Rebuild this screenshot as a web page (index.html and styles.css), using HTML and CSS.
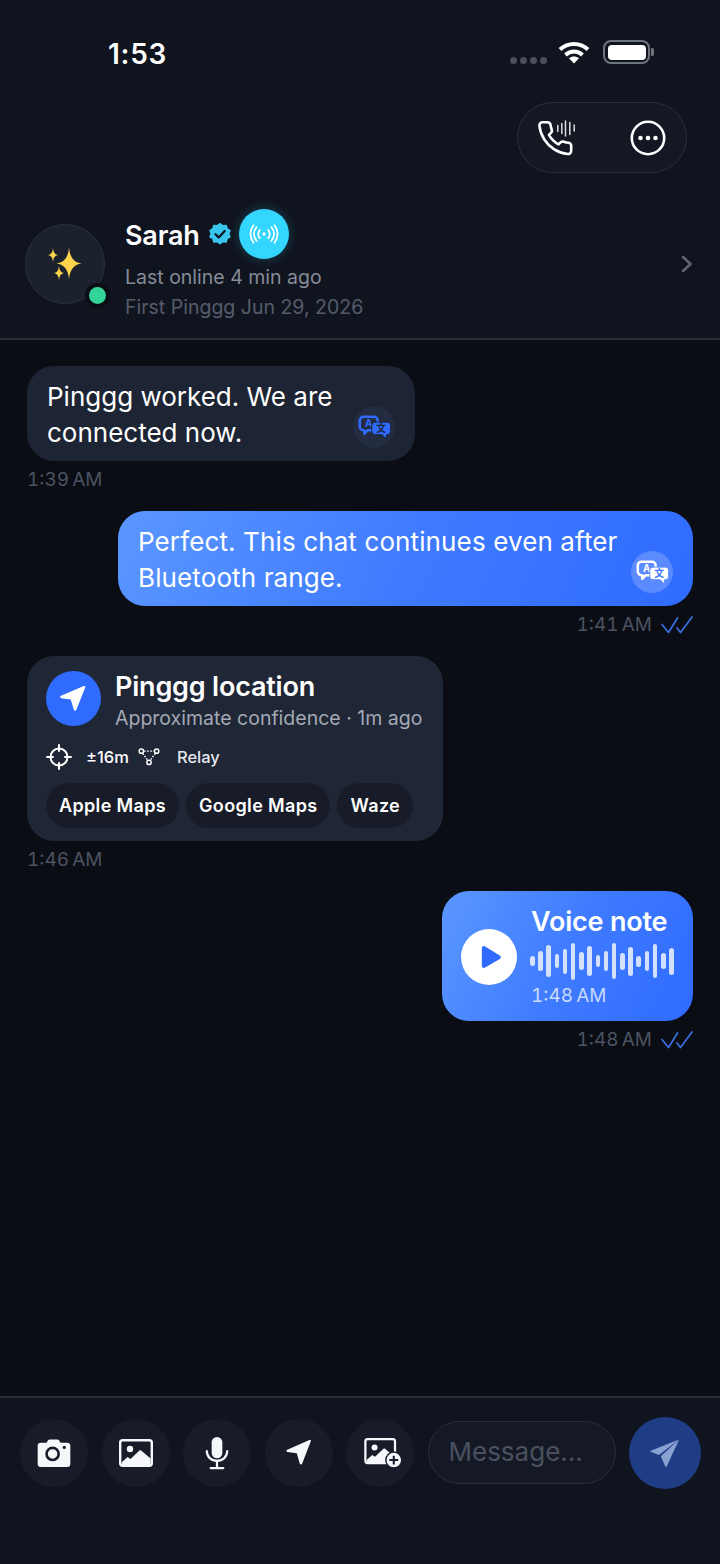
FILE: index.html
```html
<!DOCTYPE html>
<html lang="en">
<head>
    <meta charset="UTF-8">
    <meta name="viewport" content="width=device-width, initial-scale=1.0">
    <title>Pinggg Chat</title>
    <link rel="stylesheet" href="styles.css">
</head>
<body>
    <div class="phone">
        <header class="chat-header">
            <div class="status-bar">
                <span class="status-time">1:53</span>
                <div class="status-icons">
                    <div class="signal-dots"><i></i><i></i><i></i><i></i></div>
                    <svg class="wifi-icon" viewBox="0 0 32 24" fill="none" stroke="#fff" stroke-width="4">
                        <path d="M2 9.500C10 2 22 2 30 9.500"/>
                        <path d="M7.500 15c5-4.600 12-4.600 17 0"/>
                        <path d="M16 23.500l-5-5.300c3-2.400 7-2.400 10 0z" fill="#fff" stroke="none"/>
                    </svg>
                    <div class="battery"><div class="battery-fill"></div></div>
                    <div class="battery-cap"></div>
                </div>
            </div>
            <div class="action-row">
                <div class="action-pill">
                    <svg class="call-icon" viewBox="0 0 40 40" fill="none" stroke="#fff" stroke-linecap="round" stroke-linejoin="round">
                        <g transform="translate(-1 1) scale(1.600)" stroke-width="1.600">
                            <path d="M22 16.920v3a2 2 0 0 1-2.180 2 19.790 19.790 0 0 1-8.630-3.070 19.500 19.500 0 0 1-6-6 19.790 19.790 0 0 1-3.070-8.670A2 2 0 0 1 4.110 2h3a2 2 0 0 1 2 1.720c.127.960.361 1.903.700 2.810a2 2 0 0 1-.450 2.110L8.090 9.910a16 16 0 0 0 6 6l1.270-1.270a2 2 0 0 1 2.110-.450c.907.339 1.850.573 2.810.700A2 2 0 0 1 22 16.920z"/>
                        </g>
                        <path stroke-width="1.500" opacity="0.85" d="M20.800 7.500v6M24.800 5.500v10M28.500 3v15M32.800 4.500v12M37.200 7v6"/>
                    </svg>
                    <svg class="more-icon" viewBox="0 0 36 36" fill="none">
                        <circle cx="18" cy="18" r="16.200" stroke="#fff" stroke-width="2.600"/>
                        <circle cx="10.500" cy="18" r="2.300" fill="#fff"/>
                        <circle cx="18" cy="18" r="2.300" fill="#fff"/>
                        <circle cx="25.500" cy="18" r="2.300" fill="#fff"/>
                    </svg>
                </div>
            </div>
            <div class="profile-row">
                <div class="avatar">
                    <svg class="sparkles" viewBox="0 0 40 40" fill="#fcd34d">
                        <path d="M24 3.500Q25 18 36.500 19.500 25 21 24 35.500 23 21 11.500 19.500 23 18 24 3.500z"/>
                        <path d="M8 4Q8.500 10.500 13 11 8.500 11.500 8 18 7.500 11.500 3 11 7.500 10.500 8 4z"/>
                        <path d="M14 22Q14.500 28.500 19 29 14.500 29.500 14 36 13.500 29.500 9 29 13.500 28.500 14 22z"/>
                    </svg>
                    <span class="online-dot"></span>
                </div>
                <div class="profile-info">
                    <div class="name-line">
                        <span class="profile-name">Sarah</span>
                        <svg class="verified" viewBox="0 0 24 24">
                            <path fill="#38c6ee" d="M12 .800l3 2.200 3.700-.300 1 3.600 3.200 1.900-1.300 3.500 1.300 3.500-3.200 1.900-1 3.600-3.700-.300-3 2.200-3-2.200-3.700.300-1-3.600L1.100 15.200l1.300-3.500-1.300-3.500 3.200-1.900 1-3.600 3.700.300z"/>
                            <path d="M7.500 12.200l3.200 3.200 6-6.400" fill="none" stroke="#10141e" stroke-width="2.200" stroke-linecap="round" stroke-linejoin="round"/>
                        </svg>
                        <div class="ping-badge">
                            <svg viewBox="0 0 32 24" fill="none" stroke="#fff" stroke-width="1.900" stroke-linecap="round">
                                <circle cx="16" cy="12" r="1.800" fill="#fff" stroke="none"/>
                                <path d="M11.500 7.500a6.500 6.500 0 0 0 0 9M20.500 7.500a6.500 6.500 0 0 1 0 9"/>
                                <path d="M8 4.500a11 11 0 0 0 0 15M24 4.500a11 11 0 0 1 0 15"/>
                                <path d="M4.500 2.500a15.500 15.500 0 0 0 0 19M27.500 2.500a15.500 15.500 0 0 1 0 19"/>
                            </svg>
                        </div>
                    </div>
                    <div class="last-online">Last online 4 min ago</div>
                    <div class="first-ping">First Pinggg Jun 29, 2026</div>
                </div>
                <svg class="chevron" viewBox="0 0 14 20" fill="none" stroke="#5d6371" stroke-width="2.600" stroke-linecap="round" stroke-linejoin="round">
                    <path d="M3 3l7.500 7L3 17"/>
                </svg>
            </div>
        </header>

        <main class="messages">
            <div class="message incoming">
                <div class="bubble bubble-in bubble-first">
                    Pinggg worked. We are connected now.
                    <div class="translate-btn translate-in">
                        <svg viewBox="0 0 37 28">
                            <path d="M6 2h12a4 4 0 0 1 4 4v7a4 4 0 0 1-4 4h-7l-4 4v-4H6a4 4 0 0 1-4-4V6a4 4 0 0 1 4-4z" fill="none" stroke="#2f6bff" stroke-width="2.800" stroke-linejoin="round"/>
                            <text x="12" y="14" text-anchor="middle" class="translate-letter" fill="#2f6bff">A</text>
                            <path d="M19 8h14a3.500 3.500 0 0 1 3.500 3.500v7A3.500 3.500 0 0 1 33 22h-1v5l-5-5h-8a3.500 3.500 0 0 1-3.500-3.500v-7A3.500 3.500 0 0 1 19 8z" fill="#2f6bff" stroke="#1d2433" stroke-width="1"/>
                            <text x="26" y="19.500" text-anchor="middle" class="translate-letter" fill="#1d2433">文</text>
                        </svg>
                    </div>
                </div>
                <div class="meta">1:39 AM</div>
            </div>

            <div class="message outgoing">
                <div class="bubble bubble-out bubble-second">
                    Perfect. This chat continues even after Bluetooth range.
                    <div class="translate-btn translate-out">
                        <svg viewBox="0 0 37 28">
                            <path d="M6 2h12a4 4 0 0 1 4 4v7a4 4 0 0 1-4 4h-7l-4 4v-4H6a4 4 0 0 1-4-4V6a4 4 0 0 1 4-4z" fill="none" stroke="#fff" stroke-width="2.800" stroke-linejoin="round"/>
                            <text x="12" y="14" text-anchor="middle" class="translate-letter" fill="#fff">A</text>
                            <path d="M19 8h14a3.500 3.500 0 0 1 3.500 3.500v7A3.500 3.500 0 0 1 33 22h-1v5l-5-5h-8a3.500 3.500 0 0 1-3.500-3.500v-7A3.500 3.500 0 0 1 19 8z" fill="#fff" stroke="#5f8eff" stroke-width="1"/>
                            <text x="26" y="19.500" text-anchor="middle" class="translate-letter" fill="#3f77ff">文</text>
                        </svg>
                    </div>
                </div>
                <div class="meta">
                    1:41 AM
                    <svg class="read-check" viewBox="0 0 32 18" fill="none" stroke="#3b6fe0" stroke-width="1.700" stroke-linecap="round" stroke-linejoin="round">
                        <path d="M1 8.500l6.500 8L16.500 2"/>
                        <path d="M16 12l3.500 4.500L31 1"/>
                    </svg>
                </div>
            </div>

            <div class="message incoming">
                <div class="location-card">
                    <div class="location-head">
                        <div class="location-icon">
                            <svg viewBox="0 0 28 28" fill="#fff"><path d="M24.500 4.200c.600-.900-.200-1.800-1.200-1.400L2.700 11.500c-1.200.500-1 2 .300 2.200l8.500 1.200 2.800 9.200c.300 1.100 1.700 1.200 2.200.200z"/></svg>
                        </div>
                        <div>
                            <div class="location-title">Pinggg location</div>
                            <div class="location-sub">Approximate confidence · 1m ago</div>
                        </div>
                    </div>
                    <div class="location-meta">
                        <svg class="target-icon" viewBox="0 0 26 26" fill="none" stroke="#fff" stroke-width="2" stroke-linecap="round">
                            <circle cx="13" cy="13" r="8.500"/>
                            <path d="M13 1v6M13 19v6M1 13h6M19 13h6"/>
                        </svg>
                        <span class="accuracy">±16m</span>
                        <svg class="relay-icon" viewBox="0 0 24 20" fill="none" stroke="#fff" stroke-width="1.600">
                            <circle cx="3.500" cy="3.500" r="2.400"/>
                            <circle cx="20.500" cy="3.500" r="2.400"/>
                            <circle cx="12" cy="16" r="2.400"/>
                            <path d="M6.500 3.500h11M5 6l5.500 7.500M19 6l-5.500 7.500" stroke-dasharray="1.800 1.600"/>
                        </svg>
                        <span class="relay-label">Relay</span>
                    </div>
                    <div class="map-links">
                        <span class="map-chip">Apple Maps</span>
                        <span class="map-chip">Google Maps</span>
                        <span class="map-chip">Waze</span>
                    </div>
                </div>
                <div class="meta">1:46 AM</div>
            </div>

            <div class="message outgoing">
                <div class="bubble-out voice-note">
                    <div class="play-btn">
                        <svg viewBox="0 0 24 26" fill="#2f6bff"><path d="M2 3.500C2 1.500 4 .500 5.600 1.500l16 9.800c1.500.900 1.500 2.900 0 3.800l-16 9.400C4 25.500 2 24.500 2 22.500z"/></svg>
                    </div>
                    <div class="voice-body">
                        <div class="voice-title">Voice note</div>
                        <div class="waveform">
                            <i style="height:10px"></i><i style="height:20px"></i><i style="height:32px"></i><i style="height:14px"></i><i style="height:25px"></i><i style="height:37px"></i><i style="height:18px"></i><i style="height:30px"></i><i style="height:12px"></i><i style="height:20px"></i><i style="height:36px"></i><i style="height:17px"></i><i style="height:29px"></i><i style="height:11px"></i><i style="height:20px"></i><i style="height:34px"></i><i style="height:16px"></i><i style="height:27px"></i>
                        </div>
                        <div class="voice-time">1:48 AM</div>
                    </div>
                </div>
                <div class="meta">
                    1:48 AM
                    <svg class="read-check" viewBox="0 0 32 18" fill="none" stroke="#3b6fe0" stroke-width="1.700" stroke-linecap="round" stroke-linejoin="round">
                        <path d="M1 8.500l6.500 8L16.500 2"/>
                        <path d="M16 12l3.500 4.500L31 1"/>
                    </svg>
                </div>
            </div>
        </main>

        <footer class="composer">
            <div class="tool-btn">
                <svg viewBox="0 0 36 30">
                    <path fill="#f5f7fb" d="M4 4h6l1.600-2.600C12 .800 12.700.500 13.400.500h8.200c.700 0 1.400.300 1.800.900L25 4h7a3.500 3.500 0 0 1 3.500 3.500v19A3.500 3.500 0 0 1 32 30H4a3.500 3.500 0 0 1-3.500-3.500v-19A3.500 3.500 0 0 1 4 4z"/>
                    <circle cx="16.500" cy="16" r="6.500" fill="none" stroke="#171c28" stroke-width="2.800"/>
                    <circle cx="29" cy="9" r="1.700" fill="#171c28"/>
                </svg>
            </div>
            <div class="tool-btn">
                <svg viewBox="0 0 34 28">
                    <rect x="1.200" y="1.200" width="31.600" height="25.600" rx="2.500" fill="#171c28" stroke="#f5f7fb" stroke-width="2.400"/>
                    <circle cx="11" cy="10" r="3.200" fill="#f5f7fb"/>
                    <path fill="#f5f7fb" d="M2.500 23.500l6-5.500 3 2 9-8.500c.500-.400 1.100-.400 1.600 0l9.500 8V25a1 1 0 0 1-1 1H3z"/>
                </svg>
            </div>
            <div class="tool-btn">
                <svg class="mic-icon" viewBox="0 0 24 34" fill="none" stroke="#f5f7fb" stroke-width="2.300" stroke-linecap="round">
                    <rect x="6.500" y="0" width="11" height="22" rx="5.500" fill="#f5f7fb" stroke="none"/>
                    <path d="M1.500 14.500c0 6 4.500 10 10.500 10s10.500-4 10.500-10"/>
                    <path d="M12 24.500V31M5.500 32h13"/>
                </svg>
            </div>
            <div class="tool-btn">
                <svg viewBox="0 0 28 28" fill="#f5f7fb"><path d="M25.700 2.500c.700-1-.200-2-1.300-1.600L2.300 10.700c-1.200.500-1.100 2.100.200 2.300l9.300 1.300 2.900 10.300c.300 1.200 1.900 1.300 2.400.200z"/></svg>
            </div>
            <div class="tool-btn">
                <svg class="add-photo" viewBox="0 0 40 32">
                    <rect x="1.200" y="1.200" width="31.600" height="25.600" rx="2.500" fill="#171c28" stroke="#f5f7fb" stroke-width="2.400"/>
                    <circle cx="11" cy="10" r="3.200" fill="#f5f7fb"/>
                    <path fill="#f5f7fb" d="M2.500 23.500l6-5.500 3 2 9-8.500c.500-.400 1.100-.400 1.600 0l9.500 8V25a1 1 0 0 1-1 1H3z"/>
                    <circle cx="31.500" cy="23.500" r="8.500" fill="#f5f7fb" stroke="#171c28" stroke-width="1.500"/>
                    <path d="M31.500 18.800v9.400M26.800 23.500h9.400" stroke="#171c28" stroke-width="2.200"/>
                </svg>
            </div>
            <div class="message-input">Message...</div>
            <div class="send-btn">
                <svg viewBox="0 0 32 32" fill="#8aa2d3">
                    <path d="M31 1.500L.800 13.500c-.600.300-.600 1 0 1.200l8.700 3.500z"/>
                    <path d="M31 1.500L11.500 19.500l5 11.200c.300.600 1 .500 1.200-.100z"/>
                </svg>
            </div>
        </footer>
    </div>
</body>
</html>
```

FILE: styles.css
```css
* {
    box-sizing: border-box;
}
body {
    font-family: 'Inter', 'Liberation Sans', sans-serif;
    margin: 0;
    background-color: #0a0d14;
    color: #ffffff;
}
.phone {
    display: flex;
    flex-direction: column;
    width: 720px;
    height: 1564px;
    overflow: hidden;
}
svg {
    display: block;
    flex-shrink: 0;
}

/* header */
.chat-header {
    background-color: #10141e;
    border-bottom: 2px solid #292e39;
    height: 340px;
}
.status-bar {
    display: flex;
    justify-content: space-between;
    align-items: center;
    height: 102px;
    padding: 0 66px 0 108px;
}
.status-time {
    margin-top: 6px;
    font-size: 28px;
    font-weight: 600;
    letter-spacing: 0.7px;
}
.status-icons {
    display: flex;
    align-items: center;
    padding-top: 2px;
}
.signal-dots {
    display: flex;
    gap: 3px;
    margin: 16px 11px 0 0;
}
.signal-dots i {
    width: 7px;
    height: 7px;
    border-radius: 50%;
    background-color: #4a4f5a;
}
.wifi-icon {
    width: 32px;
    height: 24px;
    margin-right: 13px;
}
.battery {
    width: 47px;
    height: 24px;
    padding: 2.5px;
    border: 2px solid #6f737c;
    border-radius: 8px;
}
.battery-fill {
    height: 100%;
    background-color: #fff;
    border-radius: 4px;
}
.battery-cap {
    width: 3px;
    height: 8px;
    margin-left: 1px;
    border-radius: 0 2px 2px 0;
    background-color: #6f737c;
}
.action-row {
    display: flex;
    justify-content: flex-end;
    padding-right: 33px;
}
.action-pill {
    display: flex;
    justify-content: space-between;
    align-items: center;
    width: 170px;
    height: 71px;
    padding: 0 20px 0 19px;
    background-color: #141823;
    border: 1.5px solid #2a2f3b;
    border-radius: 36px;
}
.call-icon {
    width: 40px;
    height: 40px;
}
.more-icon {
    width: 36px;
    height: 36px;
}
.profile-row {
    display: flex;
    align-items: center;
    margin-top: 36px;
    padding: 0 26px 0 25px;
}
.avatar {
    position: relative;
    display: flex;
    justify-content: center;
    align-items: center;
    width: 80px;
    height: 80px;
    margin-bottom: 4px;
    background-color: #1b212d;
    border: 1.5px solid #2a303c;
    border-radius: 50%;
}
.sparkles {
    width: 40px;
    height: 40px;
}
.online-dot {
    position: absolute;
    right: -6px;
    bottom: -5px;
    width: 25px;
    height: 25px;
    background-color: #34d399;
    border: 4px solid #0a0d14;
    border-radius: 50%;
}
.profile-info {
    flex: 1;
    margin-left: 20px;
}
.name-line {
    display: flex;
    align-items: center;
    height: 50px;
}
.profile-name {
    margin-top: 2px;
    font-size: 27px;
    font-weight: 600;
    letter-spacing: -0.2px;
}
.verified {
    width: 24px;
    height: 24px;
    margin-left: 8px;
}
.ping-badge {
    display: flex;
    justify-content: center;
    align-items: center;
    width: 50px;
    height: 50px;
    margin-left: 7px;
    background-color: #33d6ff;
    border-radius: 50%;
    box-shadow: 0 0 12px rgba(51, 214, 255, 0.25);
}
.ping-badge svg {
    width: 30px;
    height: 22px;
}
.last-online {
    margin-top: 3px;
    font-size: 19.5px;
    line-height: 30px;
    color: #868b98;
}
.first-ping {
    font-size: 19.5px;
    line-height: 30px;
    color: #565c6a;
}
.chevron {
    width: 14px;
    height: 20px;
    margin-bottom: 4px;
}

/* messages */
.messages {
    flex: 1;
    display: flex;
    flex-direction: column;
    gap: 14px;
    padding: 26px 27px 0;
}
.message {
    display: flex;
    flex-direction: column;
}
.incoming {
    align-items: flex-start;
}
.outgoing {
    align-items: flex-end;
}
.bubble {
    position: relative;
    height: 95px;
    padding: 13px 20px;
    font-size: 26px;
    line-height: 36px;
    border-radius: 27px;
}
.bubble-first {
    width: 388px;
    padding-right: 60px;
}
.bubble-second {
    width: 575px;
    padding-right: 60px;
    letter-spacing: 0.12px;
}
.bubble-in {
    background-color: #1d2433;
}
.bubble-out {
    background: linear-gradient(115deg, #5a97ff 0%, #3f7bff 50%, #2f6bff 100%);
}
.translate-btn {
    position: absolute;
    right: 20px;
    bottom: 13px;
    display: flex;
    justify-content: center;
    align-items: center;
    width: 42px;
    height: 42px;
    border-radius: 50%;
}
.translate-btn svg {
    width: 33px;
    height: 25px;
}
.translate-in {
    background-color: #232c40;
}
.translate-out {
    background-color: rgba(255, 255, 255, 0.2);
}
.translate-letter {
    font-family: 'Inter', 'Noto Sans CJK SC', sans-serif;
    font-size: 11px;
    font-weight: 700;
}
.meta {
    display: flex;
    align-items: center;
    gap: 9px;
    height: 36px;
    padding-top: 1px;
    font-size: 19px;
    font-variant-numeric: tabular-nums;
    word-spacing: -2px;
    color: #4b5261;
}
.read-check {
    width: 32px;
    height: 18px;
}

/* location card */
.location-card {
    width: 416px;
    height: 185px;
    padding: 15px 19px;
    background-color: #1f2636;
    border-radius: 27px;
}
.location-head {
    display: flex;
    align-items: flex-start;
    gap: 14px;
}
.location-icon {
    display: flex;
    justify-content: center;
    align-items: center;
    width: 55px;
    height: 55px;
    background-color: #2f6bff;
    border-radius: 50%;
}
.location-icon svg {
    width: 31px;
    height: 31px;
}
.location-title {
    font-size: 27px;
    font-weight: 600;
    line-height: 32px;
    letter-spacing: -0.2px;
}
.location-sub {
    font-size: 19.5px;
    line-height: 30px;
    white-space: nowrap;
    color: #a4a9b5;
}
.location-meta {
    display: flex;
    align-items: center;
    height: 30px;
    margin-top: 9px;
}
.target-icon {
    width: 26px;
    height: 26px;
}
.accuracy {
    margin-left: 14px;
    font-size: 16.5px;
    font-weight: 500;
}
.relay-icon {
    width: 22px;
    height: 18px;
    margin-left: 9px;
}
.relay-label {
    margin-left: 17px;
    font-size: 16.5px;
    font-weight: 500;
    color: #e6e8ee;
}
.map-links {
    display: flex;
    gap: 7px;
    margin-top: 11px;
}
.map-chip {
    height: 45px;
    padding: 0 13px;
    font-size: 18px;
    font-weight: 600;
    line-height: 45px;
    letter-spacing: 0.35px;
    background-color: #171c28;
    border-radius: 23px;
}

/* voice note */
.voice-note {
    display: flex;
    align-items: center;
    gap: 14px;
    width: 251px;
    height: 130px;
    padding: 0 19px;
    border-radius: 27px;
}
.play-btn {
    display: flex;
    justify-content: center;
    align-items: center;
    width: 56px;
    height: 56px;
    margin-top: 2px;
    padding-left: 4px;
    background-color: #fff;
    border-radius: 50%;
    flex-shrink: 0;
}
.play-btn svg {
    width: 22px;
    height: 24px;
}
.voice-body {
    align-self: flex-start;
    padding-top: 15px;
}
.voice-title {
    font-size: 27px;
    font-weight: 600;
    line-height: 32px;
    letter-spacing: -0.2px;
}
.waveform {
    display: flex;
    align-items: center;
    gap: 3.7px;
    height: 38px;
    margin-top: 4px;
    margin-left: -1px;
}
.waveform i {
    width: 4.5px;
    border-radius: 3px;
    background-color: rgba(255, 255, 255, 0.78);
}
.voice-time {
    margin-top: 3px;
    font-size: 19px;
    font-variant-numeric: tabular-nums;
    line-height: 26px;
    word-spacing: -2px;
    color: rgba(255, 255, 255, 0.72);
}

/* composer */
.composer {
    display: flex;
    align-items: flex-start;
    gap: 13.5px;
    height: 168px;
    padding: 21px 20px 0;
    background-color: #10141e;
    border-top: 2px solid #292e39;
}
.tool-btn {
    display: flex;
    justify-content: center;
    align-items: center;
    width: 68px;
    height: 68px;
    background-color: #171c28;
    border-radius: 50%;
    flex-shrink: 0;
}
.tool-btn svg {
    width: 34px;
    height: 28px;
}
.tool-btn .mic-icon {
    width: 24px;
    height: 33px;
}
.tool-btn .add-photo {
    width: 38px;
    height: 30px;
    margin-left: 6px;
}
.message-input {
    width: 188px;
    height: 63px;
    margin-top: 2px;
    padding-left: 20px;
    font-size: 26px;
    line-height: 60px;
    color: #4a5060;
    background-color: #141925;
    border: 1.5px solid #2a2f3b;
    border-radius: 32px;
    flex-shrink: 0;
}
.send-btn {
    display: flex;
    justify-content: center;
    align-items: center;
    width: 72px;
    height: 72px;
    margin-top: -2px;
    background-color: #1f3d85;
    border-radius: 50%;
    flex-shrink: 0;
}
.send-btn svg {
    width: 30px;
    height: 30px;
}
```
